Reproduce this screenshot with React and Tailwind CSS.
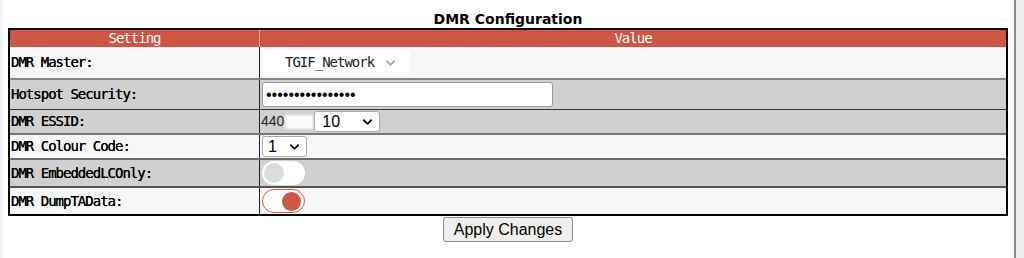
import React from 'react';

const mono = { fontFamily: '"DejaVu Sans Mono", "Liberation Mono", monospace' };

function Chevron({ className }) {
  return (
    <svg viewBox="0 0 12 8" className={className} fill="none" stroke="currentColor" strokeWidth="2" strokeLinecap="round" strokeLinejoin="round">
      <path d="M2 2l4 4 4-4" />
    </svg>
  );
}

function Toggle({ on }) {
  return on ? (
    <div className="w-[43px] h-[24px] rounded-full bg-white border border-[#d45a48] flex items-center justify-end pr-[3px]">
      <div className="w-[19px] h-[19px] rounded-full bg-[#cf5745]" />
    </div>
  ) : (
    <div className="w-[43px] h-[24px] rounded-full bg-white flex items-center pl-[2px]">
      <div className="w-[20px] h-[20px] rounded-full bg-[#dcdcdc]" />
    </div>
  );
}

function Row({ label, bg, border, h, children }) {
  return (
    <div className={`grid grid-cols-[250px_1fr] ${bg} ${border} ${h}`}>
      <div className="flex items-center pl-[1px] border-r border-[#222] text-[14px] tracking-[-1px] text-black [text-shadow:0_0_0.4px_#000]" style={mono}>
        {label}
      </div>
      <div className="flex items-center pl-[1px]">{children}</div>
    </div>
  );
}

export default function App() {
  return (
    <div className="flex w-[1024px] h-[258px] bg-white">
      <div className="w-[3px] bg-[#eef1f6]" />
      <div className="flex-1 pl-[5px] pr-[6px]">
        <h2 className="h-[28px] pt-[11px] leading-[16px] text-center text-[14px] font-bold text-black" style={{ fontFamily: '"DejaVu Sans", Verdana, sans-serif' }}>
          DMR Configuration
        </h2>
        <div className="border-2 border-black">
          <div className="grid grid-cols-[250px_1fr] h-[17px] bg-[#cd5744] text-white text-[14px] tracking-[-1px] leading-[17px]" style={mono}>
            <div className="text-center border-r border-[#e9a89c]">Setting</div>
            <div className="text-center">Value</div>
          </div>
          <Row label="DMR Master:" bg="bg-[#f7f7f7]" border="border-b-2 border-[#858585]" h="h-[33px]">
            <div className="ml-[2px] w-[147px] h-[27px] rounded-[5px] bg-white flex items-center pl-[22px] pr-[14px] justify-between text-[14px] tracking-[-1px] text-[#222]" style={mono}>
              <span>TGIF_Network</span>
              <Chevron className="w-[11px] h-[8px] text-[#aaa]" />
            </div>
          </Row>
          <Row label="Hotspot Security:" bg="bg-[#d0d0d0]" border="border-b border-[#333]" h="h-[30px]">
            <div className="ml-[1px] w-[291px] h-[25px] rounded-[3px] bg-white border border-[#999] flex items-center pl-[3px] text-[16px] text-black" style={{ fontFamily: 'Arial, "Liberation Sans", sans-serif' }}>
              ••••••••••••••••
            </div>
          </Row>
          <Row label="DMR ESSID:" bg="bg-[#d0d0d0]" border="border-b-2 border-[#777]" h="h-[25px]">
            <div className="flex items-center text-[14px] text-[#222]" style={{ fontFamily: '"Liberation Sans", Arial, sans-serif' }}>
              <span>440</span>
              <span className="w-[28px] h-[14px] bg-white/90 mx-[1px] blur-[1px]" />
              <div className="w-[66px] h-[21px] rounded-[3px] bg-white border border-[#aaa] flex items-center justify-between pl-[7px] pr-[6px] text-[16px] text-black">
                <span>10</span>
                <Chevron className="w-[11px] h-[8px] text-black" />
              </div>
            </div>
          </Row>
          <Row label="DMR Colour Code:" bg="bg-[#f7f7f7]" border="border-b-2 border-[#6a6a6a]" h="h-[25px]">
            <div className="ml-[1px] w-[45px] h-[21px] rounded-[3px] bg-white border border-[#aaa] flex items-center justify-between pl-[5px] pr-[6px] text-[16px] text-black" style={{ fontFamily: '"Liberation Sans", Arial, sans-serif' }}>
              <span>1</span>
              <Chevron className="w-[11px] h-[8px] text-black" />
            </div>
          </Row>
          <Row label="DMR EmbeddedLCOnly:" bg="bg-[#d0d0d0]" border="border-b-2 border-[#555]" h="h-[28px]">
            <div className="ml-[1px]"><Toggle on={false} /></div>
          </Row>
          <Row label="DMR DumpTAData:" bg="bg-[#f7f7f7]" border="" h="h-[26px]">
            <div className="ml-[1px]"><Toggle on /></div>
          </Row>
        </div>
        <div className="flex justify-center pt-[1px]">
          <button className="h-[25px] px-[10px] bg-[#efefef] border border-[#8f8f8f] rounded-[3px] text-[16px] text-black leading-none" style={{ fontFamily: 'Arial, "Liberation Sans", sans-serif' }}>
            Apply Changes
          </button>
        </div>
      </div>
      <div className="w-[2px] bg-[#8a8a8a]" />
      <div className="w-[8px] bg-[#eeeeee]" />
    </div>
  );
}
